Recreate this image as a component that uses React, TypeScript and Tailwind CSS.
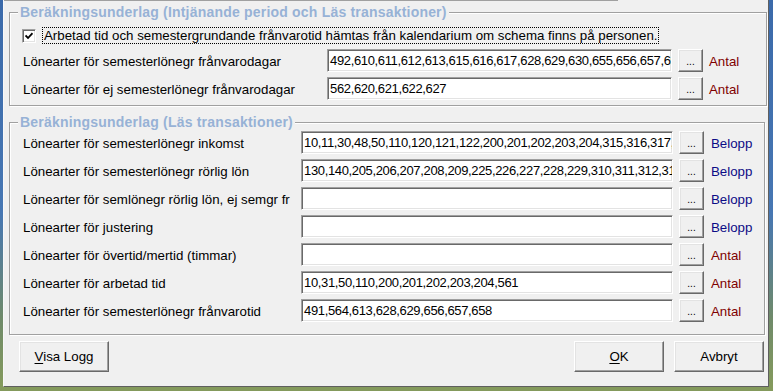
const ANTAL = "text-[#800000]";
const BELOPP = "text-[#0c0c86]";

type Row = { label: string; value: string; unit: "Antal" | "Belopp" };

const periodRows: Row[] = [
  {
    label: "Lönearter för semesterlönegr frånvarodagar",
    value: "492,610,611,612,613,615,616,617,628,629,630,655,656,657,658,659",
    unit: "Antal",
  },
  { label: "Lönearter för ej semesterlönegr frånvarodagar", value: "562,620,621,622,627", unit: "Antal" },
];

const transactionRows: Row[] = [
  {
    label: "Lönearter för semesterlönegr inkomst",
    value: "10,11,30,48,50,110,120,121,122,200,201,202,203,204,315,316,317,318",
    unit: "Belopp",
  },
  {
    label: "Lönearter för semesterlönegr rörlig lön",
    value: "130,140,205,206,207,208,209,225,226,227,228,229,310,311,312,313",
    unit: "Belopp",
  },
  { label: "Lönearter för semlönegr rörlig lön, ej semgr fr", value: "", unit: "Belopp" },
  { label: "Lönearter för justering", value: "", unit: "Belopp" },
  { label: "Lönearter för övertid/mertid (timmar)", value: "", unit: "Antal" },
  { label: "Lönearter för arbetad tid", value: "10,31,50,110,200,201,202,203,204,561", unit: "Antal" },
  { label: "Lönearter för semesterlönegr frånvarotid", value: "491,564,613,628,629,656,657,658", unit: "Antal" },
];

const sunken =
  "border border-t-[#a0a0a0] border-l-[#a0a0a0] border-b-white border-r-white shadow-[inset_1px_1px_0_#696969,inset_-1px_-1px_0_#e3e3e3] bg-white";
const raised =
  "border border-t-white border-l-white border-b-[#696969] border-r-[#696969] shadow-[inset_-1px_-1px_0_#a0a0a0,inset_1px_1px_0_#e3e3e3] bg-[#f0f0f0]";
const frameStrip =
  "bg-[linear-gradient(to_bottom,#3b6aaa_0%,#4777b3_55%,#6f8a6a_82%,#849a5c_100%)]";

function FieldRow({ row, labelWidth, inputWidth, unitGap }: { row: Row; labelWidth: string; inputWidth: string; unitGap: string }) {
  return (
    <div className="flex h-[23px] items-start">
      <span className={`${labelWidth} shrink-0 whitespace-nowrap pt-[1px] leading-[23px]`}>{row.label}</span>
      <div className={`${inputWidth} ${sunken} h-[23px] shrink-0 overflow-hidden whitespace-nowrap pl-[2px] text-[13px] leading-[21px] tracking-[-0.35px]`}>
        {row.value}
      </div>
      <button className={`${raised} ml-[6px] flex h-[23px] w-[25px] shrink-0 items-end justify-center pb-[4px] text-[10px] leading-none`}>
        ...
      </button>
      <span className={`${unitGap} shrink-0 pt-[1px] leading-[23px] ${row.unit === "Antal" ? ANTAL : BELOPP}`}>{row.unit}</span>
    </div>
  );
}

function GroupTitle({ children }: { children: string }) {
  return (
    <legend className="ml-[8px] bg-[#f0f0f0] px-[2px] text-[14px] font-bold leading-[16px] tracking-[0.2px] text-[#97b2d6]">
      {children}
    </legend>
  );
}

export default function App() {
  return (
    <div className="flex h-[391px] w-[773px] flex-col overflow-hidden bg-[#849a5c] font-['Liberation_Sans',Arial,sans-serif] text-[13.3px] text-black">
      <div className="flex h-[387px]">
        <div className={`w-[3px] ${frameStrip}`} />

        <div className="flex flex-1 flex-col border-b border-l border-r border-b-[#5f5f5f] border-l-[#f8f8f8] border-r-[#5f5f5f] bg-[#f0f0f0]">
          <div className="h-[1px] w-[614px] bg-[#a0a0a0]" />

          <fieldset className="ml-[5px] mr-[1px] mt-[3px] border border-[#a0a0a0] pb-[5px] shadow-[1px_1px_0_white,inset_1px_1px_0_white]">
            <GroupTitle>Beräkningsunderlag (Intjänande period och Läs transaktioner)</GroupTitle>

            <div className="ml-[12px] mt-[7px] flex h-[17px] items-center">
              <span className={`${sunken} flex h-[14px] w-[14px] items-center justify-center`}>
                <svg viewBox="0 0 8 8" className="h-[8px] w-[8px]" aria-hidden="true">
                  <path d="M0.5 3.5 L3 6 L7.5 1.2" fill="none" stroke="black" strokeWidth="1.8" />
                </svg>
              </span>
              <span className="ml-[6px] border border-dotted border-black px-[1px] leading-[15px]">
                Arbetad tid och semestergrundande frånvarotid hämtas från kalendarium om schema finns på personen.
              </span>
            </div>

            <div className="mt-[5px] flex flex-col gap-[5px] pl-[13px]">
              {periodRows.map((row) => (
                <FieldRow key={row.label} row={row} labelWidth="w-[304px]" inputWidth="w-[345px]" unitGap="ml-[6px]" />
              ))}
            </div>
          </fieldset>

          <fieldset className="ml-[5px] mr-[3px] mt-[8px] border border-[#a0a0a0] pb-[12px] shadow-[1px_1px_0_white,inset_1px_1px_0_white]">
            <GroupTitle>Beräkningsunderlag (Läs transaktioner)</GroupTitle>

            <div className="mt-[1px] flex flex-col gap-[5px] pl-[13px]">
              {transactionRows.map((row) => (
                <FieldRow key={row.label} row={row} labelWidth="w-[278px]" inputWidth="w-[372px]" unitGap="ml-[7px]" />
              ))}
            </div>
          </fieldset>

          <div className="ml-[15px] mr-[4px] mt-[6px] flex gap-[10px]">
            <button className={`${raised} h-[31px] w-[90px]`}>
              <span className="underline underline-offset-2">V</span>isa Logg
            </button>
            <button className={`${raised} ml-auto h-[31px] w-[90px]`}>
              <span className="underline underline-offset-2">O</span>K
            </button>
            <button className={`${raised} h-[31px] w-[90px]`}>Avbryt</button>
          </div>
        </div>

        <div className={`w-[4px] ${frameStrip}`} />
      </div>
      <div className="h-[4px] bg-[#849a5c]" />
    </div>
  );
}
